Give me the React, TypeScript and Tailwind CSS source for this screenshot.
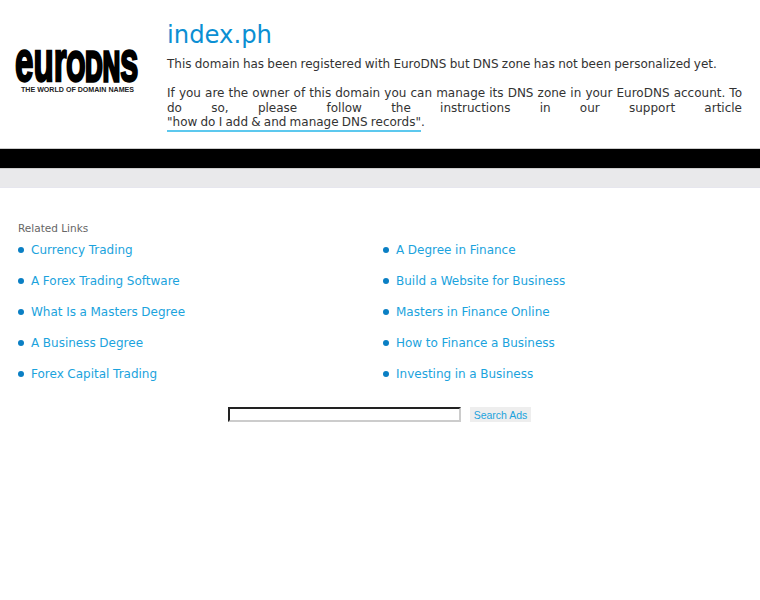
const leftLinks = ['Currency Trading', 'A Forex Trading Software', 'What Is a Masters Degree', 'A Business Degree', 'Forex Capital Trading']
const rightLinks = ['A Degree in Finance', 'Build a Website for Business', 'Masters in Finance Online', 'How to Finance a Business', 'Investing in a Business']

function Logo() {
  return (
    <svg width="130" height="44" viewBox="14 50 130 44" className="block overflow-visible">
      {/* letters are all the same height, so lowercase gets a bigger font size than capitals */}
      <text
        transform="translate(15 81) scale(0.572 1)"
        fontFamily="Liberation Sans, sans-serif"
        fontWeight="bold"
        fontSize="58"
        stroke="#000"
        strokeWidth="2.4"
        fill="#000"
      >
        eur<tspan fontSize="42" strokeWidth="3.4">ODN</tspan>s
      </text>
      <text
        x="21"
        y="92"
        textLength="113"
        lengthAdjust="spacingAndGlyphs"
        fontFamily="Liberation Sans, sans-serif"
        fontWeight="bold"
        fontSize="7.5"
        fill="#222"
      >
        THE WORLD OF DOMAIN NAMES
      </text>
    </svg>
  )
}

function LinkColumn({ links }: { links: string[] }) {
  return (
    <ul className="flex flex-col gap-[11px]">
      {links.map((link) => (
        <li key={link} className="flex items-center h-5">
          <span className="w-[6px] h-[6px] rounded-full bg-[#0a7fc4] mr-[7px]" />
          <a className="text-[12px] leading-5 text-[#1ba3dd] [word-spacing:-0.2px]">{link}</a>
        </li>
      ))}
    </ul>
  )
}

export default function App() {
  return (
    <div className="min-h-[600px] bg-white font-['DejaVu_Sans',sans-serif] text-[#333]">
      <header className="h-[148px] flex">
        <div className="w-[167px] shrink-0 pl-[14px] pt-[50px]">
          <Logo />
        </div>
        <div className="w-[575px] pt-[18px]">
          <h1 className="text-[24.3px] leading-[34px] text-[#0b8fd3]">index.ph</h1>
          <p className="mt-[5px] text-[12px] leading-[14.5px] [word-spacing:-0.6px]">
            This domain has been registered with EuroDNS but DNS zone has not been personalized yet.
          </p>
          <p className="mt-[14.5px] text-[12px] leading-[14.5px] text-justify [word-spacing:-0.6px]">
            If you are the owner of this domain you can manage its DNS zone in your EuroDNS account. To do so, please follow the instructions in our support article{' '}
            <a className="inline-block whitespace-nowrap border-b-2 border-[#5cc8ee] leading-[15px]">"how do I add &amp; and manage DNS records"</a>.
          </p>
        </div>
      </header>
      <div className="h-[20px] bg-black border-t border-[#ccc]" />
      <div className="h-[19px] bg-[#e9e9eb] border-t border-[#ccc]" />
      <div className="h-[1px] bg-[#e6e6ee]" />
      <main className="pt-[32px] pl-[18px]">
        <h2 className="text-[10.5px] leading-[16px] text-[#666]">Related Links</h2>
        <div className="grid grid-cols-[365px_1fr] mt-[4px]">
          <LinkColumn links={leftLinks} />
          <LinkColumn links={rightLinks} />
        </div>
        <form className="flex items-center mt-[23px] pl-[210px]">
          <input className="w-[233px] h-[15px] bg-white border-2 border-t-[#222] border-l-[#222] border-r-[#ccc] border-b-[#ccc]" />
          <button type="button" className="ml-[9px] w-[61px] h-[15px] bg-[#eeeeee] text-[#1ba3dd] font-['Liberation_Sans',sans-serif] text-[10.5px] leading-[14px]">
            Search Ads
          </button>
        </form>
      </main>
    </div>
  )
}
